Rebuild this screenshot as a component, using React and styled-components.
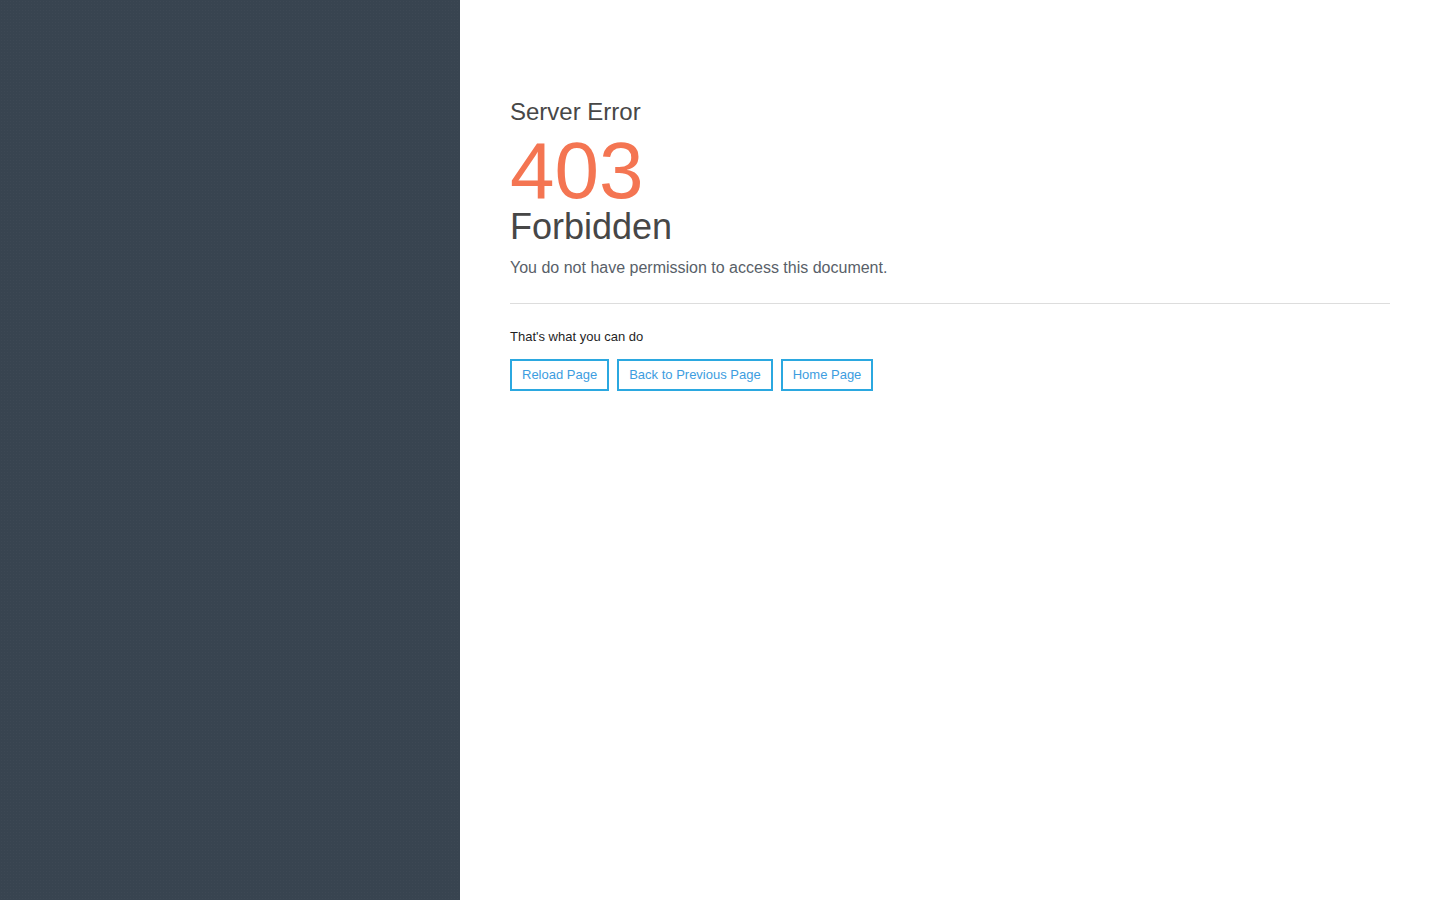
import React from "react";
import styled, { createGlobalStyle } from "styled-components";

const Global = createGlobalStyle`
  html, body, #root { height: 100%; }
  body {
    margin: 0;
    font-family: "Liberation Sans", Arial, Helvetica, sans-serif;
    background: #fff;
  }
`;

const Page = styled.div`
  display: flex;
  height: 100vh;
  min-height: 900px;
`;

const Sidebar = styled.aside`
  flex: 0 0 460px;
  background-color: #384450;
  background-image: radial-gradient(rgba(255, 255, 255, 0.025) 1px, transparent 1px);
  background-size: 3px 3px;
`;

const Main = styled.main`
  flex: 1;
  padding: 98px 50px 0 50px;
  box-sizing: border-box;
`;

const Title = styled.h2`
  margin: 0;
  font-size: 24px;
  line-height: 28px;
  font-weight: normal;
  color: #474747;
`;

const Code = styled.div`
  margin-top: 9px;
  font-size: 80px;
  line-height: 72px;
  color: #f47552;
`;

const Reason = styled.h1`
  margin: 2px 0 0;
  font-size: 36px;
  line-height: 36px;
  font-weight: normal;
  color: #474747;
`;

const Message = styled.p`
  margin: 13px 0 0;
  font-size: 16px;
  line-height: 20px;
  color: #595f69;
`;

const Rule = styled.hr`
  margin: 25px 0 0;
  border: 0;
  border-top: 1px solid #dddddd;
  height: 0;
`;

const Hint = styled.p`
  margin: 25px 0 0;
  font-size: 13px;
  line-height: 16px;
  color: #1f1f1f;
`;

const Actions = styled.div`
  display: flex;
  gap: 8px;
  margin-top: 14px;
`;

const ActionButton = styled.a`
  display: inline-block;
  padding: 6px 10px;
  border: 2px solid #2ba8e0;
  font-size: 13px;
  line-height: 16px;
  color: #3d9de0;
  text-decoration: none;
  cursor: pointer;
  background: #fff;
`;

export default function App() {
  return (
    <>
      <Global />
      <Page>
        <Sidebar />
        <Main>
          <Title>Server Error</Title>
          <Code>403</Code>
          <Reason>Forbidden</Reason>
          <Message>You do not have permission to access this document.</Message>
          <Rule />
          <Hint>That's what you can do</Hint>
          <Actions>
            <ActionButton href="#">Reload Page</ActionButton>
            <ActionButton href="#">Back to Previous Page</ActionButton>
            <ActionButton href="#">Home Page</ActionButton>
          </Actions>
        </Main>
      </Page>
    </>
  );
}
